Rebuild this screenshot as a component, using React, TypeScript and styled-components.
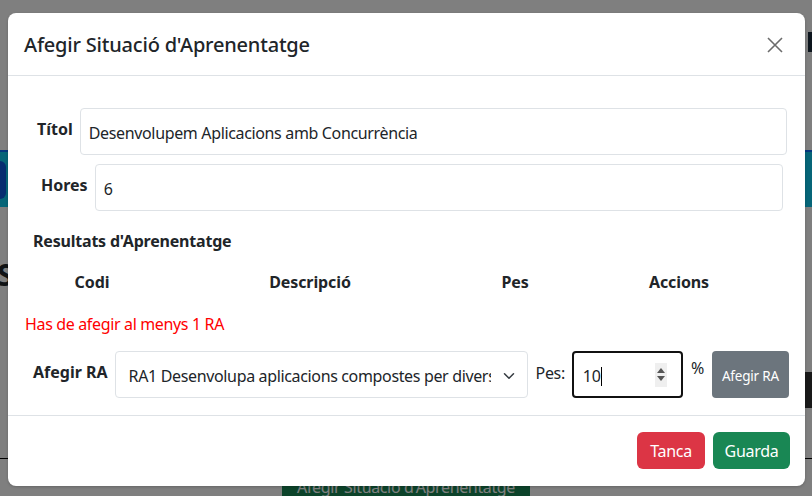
import React from "react";
import styled, { createGlobalStyle } from "styled-components";

const Global = createGlobalStyle`
  html, body { margin: 0; padding: 0; }
  body {
    width: 812px; height: 496px; overflow: hidden;
    font-family: "Noto Sans", "Open Sans", sans-serif;
    color: #212529; background: #fff;
    letter-spacing: -0.35px;
  }
  * { box-sizing: border-box; }
`;

/* ---------- background page ---------- */
const Page = styled.div`
  width: 812px;
  height: 496px;
  display: flex;
  flex-direction: column;
  position: relative;
  overflow: hidden;
`;
const TopArea = styled.div`
  height: 150px;
  display: flex;
  justify-content: flex-end;
  padding: 32px 0 0;
`;
const NavText = styled.div`
  width: 4px; height: 20px; background: #1a2a3a;
`;
const InfoBand = styled.div`
  height: 57px;
  background: #0dcaf0;
  border-top: 2px solid #0d6efd;
  display: flex;
  align-items: center;
`;
const BlueButton = styled.div`
  width: 6px; height: 38px; background: #0d5ae0; border-radius: 0 6px 6px 0;
`;
const Heading = styled.div`
  font-size: 30px; font-weight: 700; margin: 50px 0 0 -3px; line-height: 36px;
`;
const Filler = styled.div` flex: 1; `;
const GrayBlock = styled.div`
  align-self: flex-end; width: 8px; height: 36px; background: #333; margin-bottom: 50px;
`;
const TableLine = styled.div`
  height: 1px; background: #000; margin-bottom: 13px;
`;
const GreenPageButton = styled.div`
  align-self: center;
  width: 248px; height: 24px;
  background: #198754; color: #fff; font-size: 16px; white-space: nowrap; overflow: hidden;
  padding-top: 4px; text-align: center; border-radius: 4px 4px 0 0;
`;
const Overlay = styled.div`
  position: absolute; inset: 0; background: rgba(0,0,0,0.5);
`;

/* ---------- modal ---------- */
const Modal = styled.div`
  position: absolute;
  left: 8px; top: 13px;
  width: 797px; height: 473px;
  background: #fff;
  border-radius: 8px;
  display: flex;
  flex-direction: column;
  box-shadow: 0 1px 3px rgba(0,0,0,0.2);
`;
const Header = styled.div`
  height: 63px;
  padding: 0 16px;
  display: flex;
  align-items: center;
  justify-content: space-between;
  border-bottom: 1px solid #dee2e6;
`;
const Title = styled.h5`
  margin: 0; font-size: 20px; font-weight: 500; line-height: 30px;
  padding-top: 2px; letter-spacing: -0.2px;
`;
const CloseBtn = styled.button`
  border: 0; background: transparent; padding: 0; width: 20px; height: 20px;
  margin-right: 4px; margin-top: 2px; display: flex; align-items: center; justify-content: center;
`;
const Body = styled.div`
  flex: 1;
  padding: 32px 16px 0;
  display: flex;
  flex-direction: column;
`;
const FieldRow = styled.div<{ $l: number; $r: number; $mt?: number }>`
  display: flex;
  align-items: center;
  gap: 7px;
  margin: ${(p) => p.$mt ?? 0}px ${(p) => p.$r}px 0 ${(p) => p.$l}px;
`;
const Label = styled.label`
  font-weight: 700; font-size: 16px; margin-top: -5px; white-space: nowrap;
  letter-spacing: 0;
`;
const TextInput = styled.div`
  flex: 1; height: 47px; border: 1px solid #dee2e6; border-radius: 4px;
  display: flex; align-items: center; padding: 2px 8px 0; font-size: 16px;
`;
const SectionTitle = styled.div`
  font-weight: 700; font-size: 16px; margin: 18px 0 0 9px; line-height: 24px;
  letter-spacing: -0.2px;
`;
const TableHead = styled.div`
  display: grid;
  grid-template-columns: 134px 302px 108px 220px;
  margin: 17px 0 0 1px;
  font-weight: 700; font-size: 16px; line-height: 24px;
  text-align: center; letter-spacing: -0.1px;
`;
const ErrorText = styled.div`
  color: #ff0000; font-size: 16px; line-height: 24px; margin: 18px 0 0 1px;
`;
const AddRow = styled.div`
  display: flex; align-items: center; margin: 15px 0 0 9px; height: 47px;
`;
const AddLabel = styled(Label)`
  margin: -6px 7px 0 0;
`;
const SelectBox = styled.div`
  width: 413px; height: 47px; border: 1px solid #dee2e6; border-radius: 4px;
  display: flex; align-items: center; padding: 2px 12px 0 13px; font-size: 16px;
  gap: 12px;
`;
const SelectText = styled.span`
  flex: 1; overflow: hidden; white-space: nowrap;
`;
const PesLabel = styled.span`
  font-size: 16px; margin: -4px 7px 0 8px;
`;
const NumberInput = styled.div`
  width: 113px; height: 47px; border: 2px solid #111; border-radius: 4px;
  display: flex; align-items: center; padding: 3px 14px 0 9px; font-size: 16px;
`;
const Caret = styled.span`
  display: inline-block; width: 1px; height: 19px; background: #000; margin-left: 1px;
`;
const Spinner = styled.div`
  margin-left: auto; width: 12px; height: 24px; background: #efefef;
  display: flex; flex-direction: column; align-items: center; justify-content: center; gap: 3px;
  margin-top: -3px;
`;
const Percent = styled.span`
  font-size: 16px; margin: -14px 8px 0 8px;
`;
const GrayButton = styled.button`
  width: 79px; height: 47px; background: #6c757d; color: #fff; border: 0; border-radius: 4px;
  font-family: inherit; font-size: 13.5px; padding: 2px 0 0; letter-spacing: -0.2px;
`;
const Footer = styled.div`
  height: 71px; border-top: 1px solid #dee2e6;
  display: flex; align-items: center; justify-content: flex-end;
  padding: 0 15px 2px; gap: 8px;
`;
const Btn = styled.button<{ $bg: string; $w: number }>`
  width: ${(p) => p.$w}px; height: 37px; border: 0; border-radius: 6px;
  background: ${(p) => p.$bg}; color: #fff; font-family: inherit; font-size: 16px;
  padding: 1px 0 0; letter-spacing: -0.3px;
`;

export default function App() {
  return (
    <>
      <Global />
      <Page>
        <TopArea><NavText /></TopArea>
        <InfoBand><BlueButton /></InfoBand>
        <Heading>Situacions</Heading>
        <Filler />
        <GrayBlock />
        <TableLine />
        <GreenPageButton>Afegir Situació d'Aprenentatge</GreenPageButton>
        <Overlay />
        <Modal>
          <Header>
            <Title>Afegir Situació d'Aprenentatge</Title>
            <CloseBtn aria-label="close">
              <svg width="16" height="16" viewBox="0 0 16 16">
                <path d="M1 1 L15 15 M15 1 L1 15" stroke="#6c6c6c" strokeWidth="1.6" fill="none" />
              </svg>
            </CloseBtn>
          </Header>
          <Body>
            <FieldRow $l={13} $r={2}>
              <Label>Títol</Label>
              <TextInput>Desenvolupem Aplicacions amb Concurrència</TextInput>
            </FieldRow>
            <FieldRow $l={17} $r={6} $mt={9}>
              <Label>Hores</Label>
              <TextInput>6</TextInput>
            </FieldRow>
            <SectionTitle>Resultats d'Aprenentatge</SectionTitle>
            <TableHead>
              <span>Codi</span>
              <span>Descripció</span>
              <span>Pes</span>
              <span>Accions</span>
            </TableHead>
            <ErrorText>Has de afegir al menys 1 RA</ErrorText>
            <AddRow>
              <AddLabel>Afegir RA</AddLabel>
              <SelectBox>
                <SelectText>RA1 Desenvolupa aplicacions compostes per diverses tasques</SelectText>
                <svg width="12" height="12" viewBox="0 0 16 16">
                  <path d="M2 5 L8 11 L14 5" stroke="#343a40" strokeWidth="2" fill="none" strokeLinecap="round" strokeLinejoin="round" />
                </svg>
              </SelectBox>
              <PesLabel>Pes:</PesLabel>
              <NumberInput>
                10<Caret />
                <Spinner>
                  <svg width="8" height="5" viewBox="0 0 8 5"><path d="M0 5 L4 0 L8 5Z" fill="#555" /></svg>
                  <svg width="8" height="5" viewBox="0 0 8 5"><path d="M0 0 L4 5 L8 0Z" fill="#555" /></svg>
                </Spinner>
              </NumberInput>
              <Percent>%</Percent>
              <GrayButton>Afegir RA</GrayButton>
            </AddRow>
          </Body>
          <Footer>
            <Btn $bg="#dc3545" $w={68}>Tanca</Btn>
            <Btn $bg="#198754" $w={77}>Guarda</Btn>
          </Footer>
        </Modal>
      </Page>
    </>
  );
}
